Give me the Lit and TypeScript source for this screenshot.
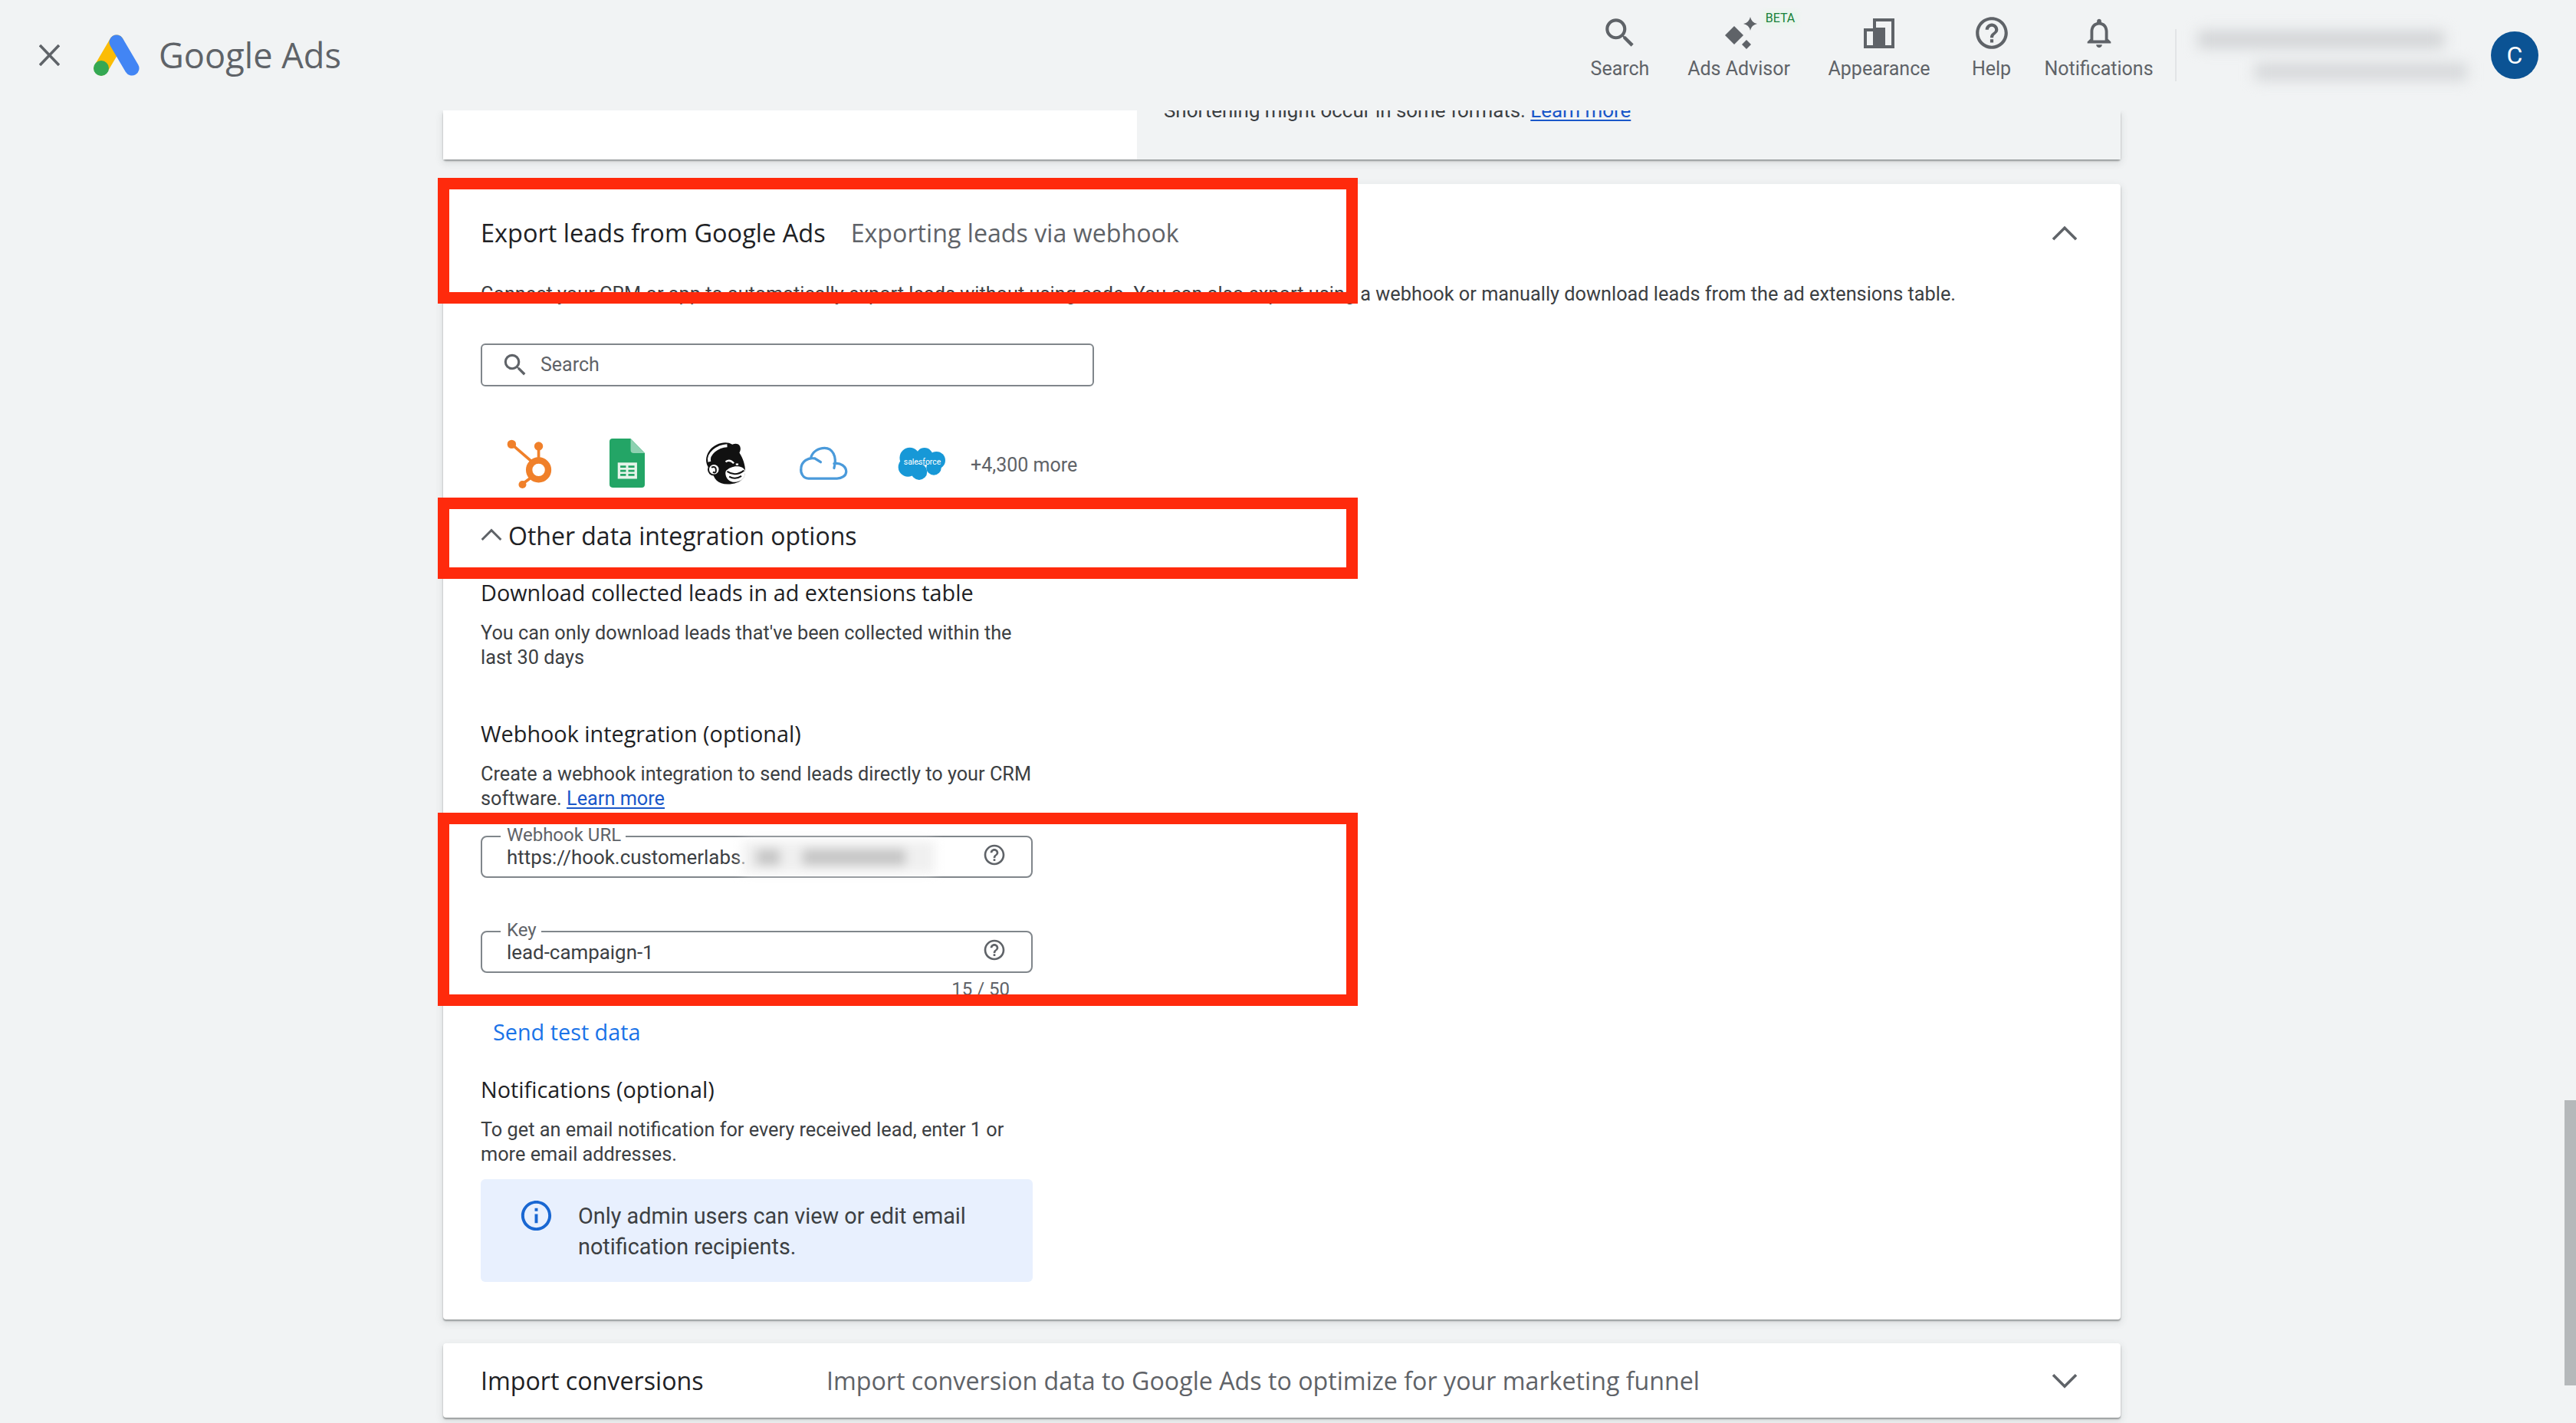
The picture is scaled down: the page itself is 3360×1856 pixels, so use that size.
import { LitElement, html, css, svg } from 'lit';
import { customElement } from 'lit/decorators.js';

const HELP_PATH = 'M11 18h2v-2h-2v2zm1-16C6.48 2 2 6.48 2 12s4.48 10 10 10 10-4.48 10-10S17.52 2 12 2zm0 18c-4.41 0-8-3.59-8-8s3.59-8 8-8 8 3.59 8 8-3.59 8-8 8zm0-14c-2.21 0-4 1.79-4 4h2c0-1.1.9-2 2-2s2 .9 2 2c0 2-3 1.75-3 5h2c0-2.25 3-2.5 3-5 0-2.21-1.79-4-4-4z';
const SEARCH_PATH = 'M15.5 14h-.79l-.28-.27A6.471 6.471 0 0 0 16 9.5 6.5 6.5 0 1 0 9.5 16c1.61 0 3.09-.59 4.23-1.57l.27.28v.79l5 4.99L20.49 19l-4.99-5zm-6 0C7.01 14 5 11.99 5 9.5S7.01 5 9.5 5 14 7.01 14 9.5 11.99 14 9.5 14z';
const BELL_PATH = 'M12 22c1.1 0 2-.9 2-2h-4c0 1.1.9 2 2 2zm6-6v-5c0-3.07-1.63-5.64-4.5-6.32V4c0-.83-.67-1.5-1.5-1.5s-1.5.67-1.5 1.5v.68C7.64 5.36 6 7.92 6 11v5l-2 2v1h16v-1l-2-2zm-2 1H8v-6c0-2.48 1.51-4.5 4-4.5s4 2.02 4 4.5v6z';
const INFO_PATH = 'M11 7h2v2h-2zm0 4h2v6h-2zm1-9C6.48 2 2 6.48 2 12s4.48 10 10 10 10-4.48 10-10S17.52 2 12 2zm0 18c-4.41 0-8-3.59-8-8s3.59-8 8-8 8 3.59 8 8-3.59 8-8 8z';

// Red annotation frames drawn over the page: x, y, width, height
const FRAMES = [
  [571, 232, 1200, 164],
  [571, 649, 1200, 106],
  [571, 1060, 1200, 252],
];

const matIcon = (d: string, size: number, color = '#5f6368') => html`
  <svg width=${size} height=${size} viewBox="0 0 24 24" fill=${color}>${svg`<path d=${d}></path>`}</svg>`;

const chevron = (up: boolean, w = 34) => html`
  <svg width=${w} height=${w * 0.6} viewBox="0 0 34 20" fill="none" stroke="#5f6368" stroke-width="3.6">
    ${svg`<polyline points=${up ? '2,18 17,3 32,18' : '2,3 17,18 32,3'}></polyline>`}
  </svg>`;

const adsLogo = html`
  <svg width="61" height="54" viewBox="0 0 61 54" fill="none" stroke-linecap="round" stroke-width="19">
    <line x1="31" y1="10" x2="11" y2="44" stroke="#fbbc04"></line>
    <line x1="31" y1="10" x2="51" y2="44" stroke="#4285f4"></line>
    <circle cx="11" cy="44" r="10" fill="#34a853" stroke="none"></circle>
  </svg>`;

const closeIcon = html`
  <svg width="27" height="28" viewBox="0 0 27 28" stroke="#5f6368" stroke-width="3.6">
    <line x1="1" y1="1" x2="26" y2="27"></line>
    <line x1="26" y1="1" x2="1" y2="27"></line>
  </svg>`;

const sparkleIcon = html`
  <svg width="46" height="42" viewBox="0 0 46 42" fill="#5f6368">
    <polygon points="14,12 26,24 14,36 2,24"></polygon>
    <path d="M35 0 Q36.5 7.5 44 9 Q36.5 10.5 35 18 Q33.5 10.5 26 9 Q33.5 7.5 35 0Z"></path>
    <polygon points="30,30 36,36 30,42 24,36"></polygon>
  </svg>`;

const appearanceIcon = html`
  <svg width="40" height="39" viewBox="0 0 40 39">
    <path fill="#5f6368" d="M12 0H40V39H0V13H12Z"></path>
    <path fill="#f1f3f4" d="M4 17H12V35H4ZM16 4H36V35H28V12H16Z"></path>
  </svg>`;

const hubspotLogo = html`
  <svg width="62" height="67" viewBox="30 15 185 200" fill="#f0802a" stroke="#f0802a">
    <circle cx="160" cy="140" r="37" fill="none" stroke-width="25"></circle>
    <line x1="55" y1="40" x2="130" y2="105" stroke-width="11"></line>
    <circle cx="55" cy="40" r="17" stroke="none"></circle>
    <line x1="160" y1="50" x2="160" y2="100" stroke-width="11"></line>
    <circle cx="160" cy="48" r="17" stroke="none"></circle>
    <line x1="130" y1="170" x2="97" y2="195" stroke-width="11"></line>
    <circle cx="97" cy="197" r="15" stroke="none"></circle>
  </svg>`;

const sheetsLogo = html`
  <svg width="46" height="64" viewBox="438 22 137 190">
    <path fill="#23a566" d="M450 22H520L575 78V200a12 12 0 0 1-12 12H450a12 12 0 0 1-12-12V34a12 12 0 0 1 12-12Z"></path>
    <path fill="#8ed1b1" d="M520 22L575 78H532a12 12 0 0 1-12-12Z"></path>
    <rect x="470" y="115" width="75" height="63" fill="#e6f4ea"></rect>
    <path fill="#23a566" d="M480 127H502V135H480ZM511 127H535V135H511ZM480 143H502V151H480ZM511 143H535V151H511ZM480 159H502V167H480ZM511 159H535V167H511Z"></path>
  </svg>`;

const mailchimpLogo = html`
  <svg width="53" height="56" viewBox="812 33 160 168">
    <path fill="#111" d="M900 200C862 200 842 178 842 150C815 135 805 100 828 68C850 38 895 28 918 44C945 32 958 55 946 76C966 105 976 150 964 172C950 194 925 200 900 200Z"></path>
    <path fill="none" stroke="#fff" stroke-width="12" d="M828 112C820 80 860 50 898 48"></path>
    <circle cx="846" cy="142" r="22" fill="#fff" stroke="#111" stroke-width="6"></circle>
    <path fill="none" stroke="#111" stroke-width="6" d="M836 134Q854 128 854 144T842 152"></path>
    <path fill="#fff" d="M892 150C912 124 958 124 968 146C974 174 952 192 928 192C904 192 888 172 892 150Z"></path>
    <path fill="none" stroke="#111" stroke-width="6" d="M898 150Q930 172 964 146M906 170Q930 184 954 168"></path>
    <path fill="none" stroke="#fff" stroke-width="7" d="M892 112Q908 100 924 118M932 122h10"></path>
  </svg>`;

const cloudLogo = html`
  <svg width="64" height="44" viewBox="38 48 194 136" fill="none" stroke="#4a9ada" stroke-width="10" stroke-linecap="round">
    <path d="M75 178C52 178 42 155 45 135C48 110 72 92 100 97L124 112M84 96C90 70 115 55 140 55C170 55 192 88 178 136M178 118C205 112 227 132 227 150C227 168 208 178 190 178H75"></path>
  </svg>`;

const salesforceLogo = html`
  <svg width="62" height="43" viewBox="430 55 178 123" fill="#1798d7">
    <circle cx="475" cy="95" r="38"></circle>
    <circle cx="530" cy="90" r="32"></circle>
    <circle cx="575" cy="105" r="33"></circle>
    <circle cx="565" cy="132" r="28"></circle>
    <circle cx="510" cy="148" r="30"></circle>
    <circle cx="468" cy="130" r="36"></circle>
    <text x="522" y="122" text-anchor="middle" fill="#fff" font-size="30" font-family="Roboto, sans-serif">salesforce</text>
  </svg>`;

@customElement('app-root')
export class AppRoot extends LitElement {
  static styles = css`
    :host {
      display: block;
      position: relative;
      width: 3360px;
      height: 1856px;
      overflow: hidden;
      background: #f1f3f4;
      font-family: Roboto, "Liberation Sans", sans-serif;
      font-size: 25.3px;
      line-height: 32px;
      color: #3c4043;
    }

    a { color: #1a57c9; text-decoration: underline; text-underline-offset: 3px; }

    /* top bar */
    .topbar {
      display: flex;
      align-items: center;
      height: 144px;
      padding: 0 49px 0 51px;
      background: #f1f3f4;
      position: relative;
      z-index: 2;
    }
    .brand { display: flex; align-items: center; margin-left: 43px; gap: 25px; }
    .brand-name { font-family: "Open Sans", Roboto, sans-serif; font-size: 45.2px; line-height: 56px; color: #5f6368; }
    .nav {
      display: grid;
      grid-template-columns: 126px 184px 182px 111px 169px;
      margin-left: auto;
      align-self: flex-start;
      padding-top: 18px;
    }
    .nav-item { position: relative; display: flex; flex-direction: column; align-items: center; font-size: 25px; color: #5f6368; }
    .nav-icon { height: 50px; display: flex; align-items: center; justify-content: center; margin-bottom: 8px; }
    .nav-label { line-height: 28px; white-space: nowrap; }
    .sparkle { display: flex; margin-left: 6px; }
    .beta {
      position: absolute;
      left: 125px;
      top: -2px;
      width: 42px;
      text-align: center;
      font-size: 16px;
      line-height: 16px;
      color: #188038;
      background: #e9f5ec;
      box-shadow: 0 0 6px 2px #e9f5ec;
    }
    .divider { width: 2px; height: 68px; background: #e2e4e6; margin: 0 28px 0 15px; }
    .user { display: flex; flex-direction: column; align-items: flex-end; gap: 19px; width: 351px; margin-right: 31px; filter: blur(9px); }
    .user-a { width: 321px; height: 23px; margin-right: 30px; background: #d2d4d6; }
    .user-b { width: 277px; height: 23px; background: #d6d8da; }
    .avatar {
      width: 62px;
      height: 62px;
      border-radius: 50%;
      background: #0b5394;
      color: #fff;
      font-size: 32px;
      display: flex;
      align-items: center;
      justify-content: center;
    }

    /* page body */
    .page { width: 2188px; margin-left: 578px; }
    .card {
      background: #fff;
      border-radius: 4px;
      box-shadow: 0 2px 2px rgba(60, 64, 67, 0.45), 0 4px 10px 2px rgba(60, 64, 67, 0.1);
    }

    .prev { display: flex; height: 64px; }
    .prev-left { width: 905px; background: #fff; }
    .prev-right { flex: 1; overflow: hidden; background: #f1f3f4; padding-left: 35px; font-size: 25.9px; }
    .prev-text { margin-top: -16px; white-space: nowrap; }

    .export { margin-top: 32px; padding: 0 56px 49px 49px; }
    .head { display: flex; align-items: center; height: 128px; }
    .head-title { font-family: "Open Sans", Roboto, sans-serif; font-size: 32.5px; font-weight: 500; color: #202124; }
    .head-sub { font-family: "Open Sans", Roboto, sans-serif; font-size: 32.2px; color: #5f6368; margin-left: 33px; }
    .head-chevron { margin-left: auto; display: flex; }

    .search {
      width: 800px;
      height: 56px;
      box-sizing: border-box;
      margin-top: 48px;
      margin-bottom: -1px;
      border: 2px solid #80868b;
      border-radius: 6px;
      padding-left: 28px;
      display: flex;
      align-items: center;
      gap: 14px;
      color: #5f6368;
      font-size: 25px;
    }
    .search svg { margin-left: -4px; }

    .logos { display: flex; align-items: center; height: 64px; margin-top: 69px; margin-left: -1px; }
    .logo { width: 128px; display: flex; justify-content: center; }
    .more { color: #5f6368; font-size: 25px; padding-top: 6px; }

    .options {
      display: flex;
      align-items: center;
      gap: 8px;
      height: 38px;
      margin-top: 44px;
      font-family: "Open Sans", Roboto, sans-serif;
      font-size: 32px;
      font-weight: 500;
      color: #202124;
    }
    .options svg { margin-top: -4px; }

    h4 {
      margin: 0;
      font-family: "Open Sans", Roboto, sans-serif;
      font-size: 28.8px;
      font-weight: 500;
      line-height: 36px;
      color: #202124;
    }
    .desc { width: 720px; margin: 18px 0 0; position: relative; top: 1px; }
    .dl { margin-top: 37px; }
    .hook { margin-top: 66px; }

    .field {
      position: relative;
      box-sizing: border-box;
      width: 720px;
      height: 55px;
      display: flex;
      align-items: center;
      padding: 0 32px 0 32px;
      border: 2px solid #80868b;
      border-radius: 8px;
      font-size: 25.9px;
      color: #3c4043;
    }
    .field-url { margin-top: 33px; }
    .field-key { margin-top: 69px; }
    .field-label {
      position: absolute;
      left: 24px;
      top: -17px;
      padding: 0 6px 0 8px;
      background: #fff;
      font-size: 24px;
      line-height: 28px;
      color: #5f6368;
    }
    .field svg { margin-left: auto; margin-top: -6px; }
    .redact {
      width: 250px;
      height: 42px;
      margin-left: -4px;
      display: flex;
      align-items: center;
      gap: 30px;
      background: #f0f0f0;
      filter: blur(7px);
    }
    .redact i { display: block; height: 20px; background: #c4c4c4; }
    .redact-a { width: 30px; margin-left: 18px; }
    .redact-b { width: 134px; }
    .count { width: 720px; box-sizing: border-box; padding-right: 30px; text-align: right; font-size: 24px; line-height: 28px; margin-top: 7px; color: #5f6368; }
    .send {
      margin-top: 24px;
      padding-left: 16px;
      font-family: "Open Sans", Roboto, sans-serif;
      font-size: 28.8px;
      font-weight: 500;
      line-height: 36px;
      color: #1a73e8;
    }
    .notify { margin-top: 39px; }
    .note {
      box-sizing: border-box;
      width: 720px;
      height: 134px;
      margin-top: 17px;
      padding: 28px 40px 0 49px;
      display: flex;
      gap: 31px;
      background: #e8f0fe;
      border-radius: 6px;
      font-size: 28.8px;
      line-height: 40px;
      color: #3c4043;
    }
    .note svg { flex: none; margin-top: -4px; }

    .import {
      display: flex;
      align-items: center;
      height: 97px;
      margin-top: 31px;
      padding: 0 56px 0 49px;
      font-family: "Open Sans", Roboto, sans-serif;
      font-size: 32.2px;
    }
    .import-title { width: 451px; font-weight: 500; color: #202124; }
    .import-sub { color: #5f6368; }
    .import-chevron { margin-left: auto; display: flex; }

    /* overlays */
    .scrollbar { position: absolute; right: 0; top: 1435px; width: 15px; height: 372px; background: #b5b8ba; }
    .frame { position: absolute; box-sizing: border-box; border: 15px solid #ff2a0c; z-index: 3; }
  `;

  render() {
    return html`
      <header class="topbar">
        ${closeIcon}
        <div class="brand">${adsLogo}<span class="brand-name">Google Ads</span></div>
        <nav class="nav">
          <div class="nav-item"><div class="nav-icon">${matIcon(SEARCH_PATH, 50)}</div><span class="nav-label">Search</span></div>
          <div class="nav-item"><div class="nav-icon"><span class="sparkle">${sparkleIcon}</span></div><span class="nav-label">Ads Advisor</span><span class="beta">BETA</span></div>
          <div class="nav-item"><div class="nav-icon">${appearanceIcon}</div><span class="nav-label">Appearance</span></div>
          <div class="nav-item"><div class="nav-icon">${matIcon(HELP_PATH, 50)}</div><span class="nav-label">Help</span></div>
          <div class="nav-item"><div class="nav-icon">${matIcon(BELL_PATH, 46)}</div><span class="nav-label">Notifications</span></div>
        </nav>
        <div class="divider"></div>
        <div class="user"><div class="user-a"></div><div class="user-b"></div></div>
        <div class="avatar">C</div>
      </header>

      <main class="page">
        <section class="card prev">
          <div class="prev-left"></div>
          <div class="prev-right">
            <div class="prev-text">Shortening might occur in some formats. <a>Learn more</a></div>
          </div>
        </section>

        <section class="card export">
          <div class="head">
            <span class="head-title">Export leads from Google Ads</span>
            <span class="head-sub">Exporting leads via webhook</span>
            <span class="head-chevron">${chevron(true)}</span>
          </div>
          <div>Connect your CRM or app to automatically export leads without using code. You can also export using a webhook or manually download leads from the ad extensions table.</div>

          <div class="search">${matIcon(SEARCH_PATH, 38)}<span>Search</span></div>

          <div class="logos">
            <div class="logo">${hubspotLogo}</div>
            <div class="logo">${sheetsLogo}</div>
            <div class="logo">${mailchimpLogo}</div>
            <div class="logo">${cloudLogo}</div>
            <div class="logo">${salesforceLogo}</div>
            <span class="more">+4,300 more</span>
          </div>

          <div class="options">${chevron(true, 28)}<span>Other data integration options</span></div>

          <h4 class="dl">Download collected leads in ad extensions table</h4>
          <p class="desc">You can only download leads that've been collected within the last 30 days</p>

          <h4 class="hook">Webhook integration (optional)</h4>
          <p class="desc">Create a webhook integration to send leads directly to your CRM software. <a>Learn more</a></p>

          <div class="field field-url">
            <span class="field-label">Webhook URL</span>
            <span>https://hook.customerlabs.</span>
            <div class="redact"><i class="redact-a"></i><i class="redact-b"></i></div>
            ${matIcon(HELP_PATH, 32)}
          </div>
          <div class="field field-key">
            <span class="field-label">Key</span>
            <span>lead-campaign-1</span>
            ${matIcon(HELP_PATH, 32)}
          </div>
          <div class="count">15 / 50</div>

          <div class="send">Send test data</div>

          <h4 class="notify">Notifications (optional)</h4>
          <p class="desc">To get an email notification for every received lead, enter 1 or more email addresses.</p>
          <div class="note">
            ${matIcon(INFO_PATH, 47, '#1967d2')}
            <span>Only admin users can view or edit email notification recipients.</span>
          </div>
        </section>

        <section class="card import">
          <span class="import-title">Import conversions</span>
          <span class="import-sub">Import conversion data to Google Ads to optimize for your marketing funnel</span>
          <span class="import-chevron">${chevron(false)}</span>
        </section>
      </main>

      <div class="scrollbar"></div>
      ${FRAMES.map(([x, y, w, h]) => html`
        <div class="frame" style="left:${x}px;top:${y}px;width:${w}px;height:${h}px"></div>`)}
    `;
  }
}
